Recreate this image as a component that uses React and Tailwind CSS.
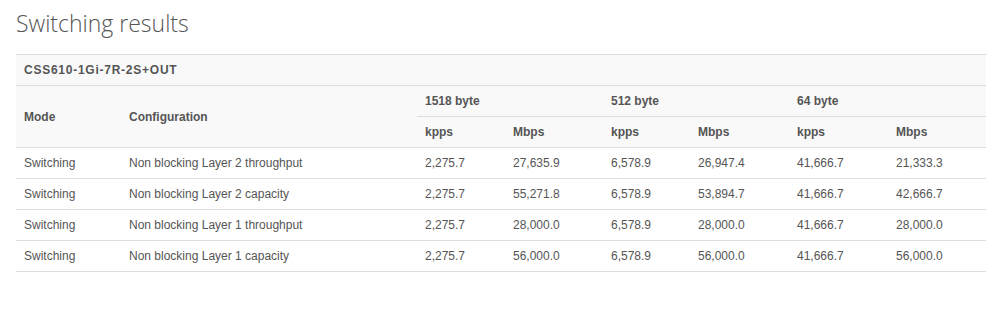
import React from "react";

const rows = [
  ["Switching", "Non blocking Layer 2 throughput", "2,275.7", "27,635.9", "6,578.9", "26,947.4", "41,666.7", "21,333.3"],
  ["Switching", "Non blocking Layer 2 capacity", "2,275.7", "55,271.8", "6,578.9", "53,894.7", "41,666.7", "42,666.7"],
  ["Switching", "Non blocking Layer 1 throughput", "2,275.7", "28,000.0", "6,578.9", "28,000.0", "41,666.7", "28,000.0"],
  ["Switching", "Non blocking Layer 1 capacity", "2,275.7", "56,000.0", "6,578.9", "56,000.0", "41,666.7", "56,000.0"],
];

export default function App() {
  return (
    <div className="w-[1001px] h-[324px] bg-white px-4 pt-[7px]" style={{ fontFamily: '"Liberation Sans", Arial, sans-serif' }}>
      <h1 className="text-[23px] leading-[32px] font-light text-[#555]" style={{ fontFamily: '"Open Sans", sans-serif' }}>
        Switching results
      </h1>
      <table className="mt-[15px] w-[970px] border-collapse table-fixed text-[12px] text-[#555]">
        <colgroup>
          <col className="w-[105px]" />
          <col className="w-[296px]" />
          <col className="w-[88px]" />
          <col className="w-[98px]" />
          <col className="w-[87px]" />
          <col className="w-[99px]" />
          <col className="w-[99px]" />
          <col className="w-[98px]" />
        </colgroup>
        <thead className="bg-[#f9f9f9]">
          <tr className="h-[31px] border-t border-[#ddd]">
            <th colSpan={8} className="text-left font-bold px-2 tracking-[0.75px]">CSS610-1Gi-7R-2S+OUT</th>
          </tr>
          <tr className="h-[31px] border-t border-[#ddd]">
            <th rowSpan={2} className="text-left font-bold px-2">Mode</th>
            <th rowSpan={2} className="text-left font-bold px-2">Configuration</th>
            <th colSpan={2} className="text-left font-bold px-2">1518 byte</th>
            <th colSpan={2} className="text-left font-bold px-2">512 byte</th>
            <th colSpan={2} className="text-left font-bold px-2">64 byte</th>
          </tr>
          <tr className="h-[31px]">
            {["kpps", "Mbps", "kpps", "Mbps", "kpps", "Mbps"].map((h, i) => (
              <th key={i} className="text-left font-bold px-2 border-t border-[#ddd]">{h}</th>
            ))}
          </tr>
        </thead>
        <tbody>
          {rows.map((r, i) => (
            <tr key={i} className="h-[31px] border-t border-b border-[#ddd]">
              {r.map((c, j) => (
                <td key={j} className="px-2 text-left">{c}</td>
              ))}
            </tr>
          ))}
        </tbody>
      </table>
    </div>
  );
}
